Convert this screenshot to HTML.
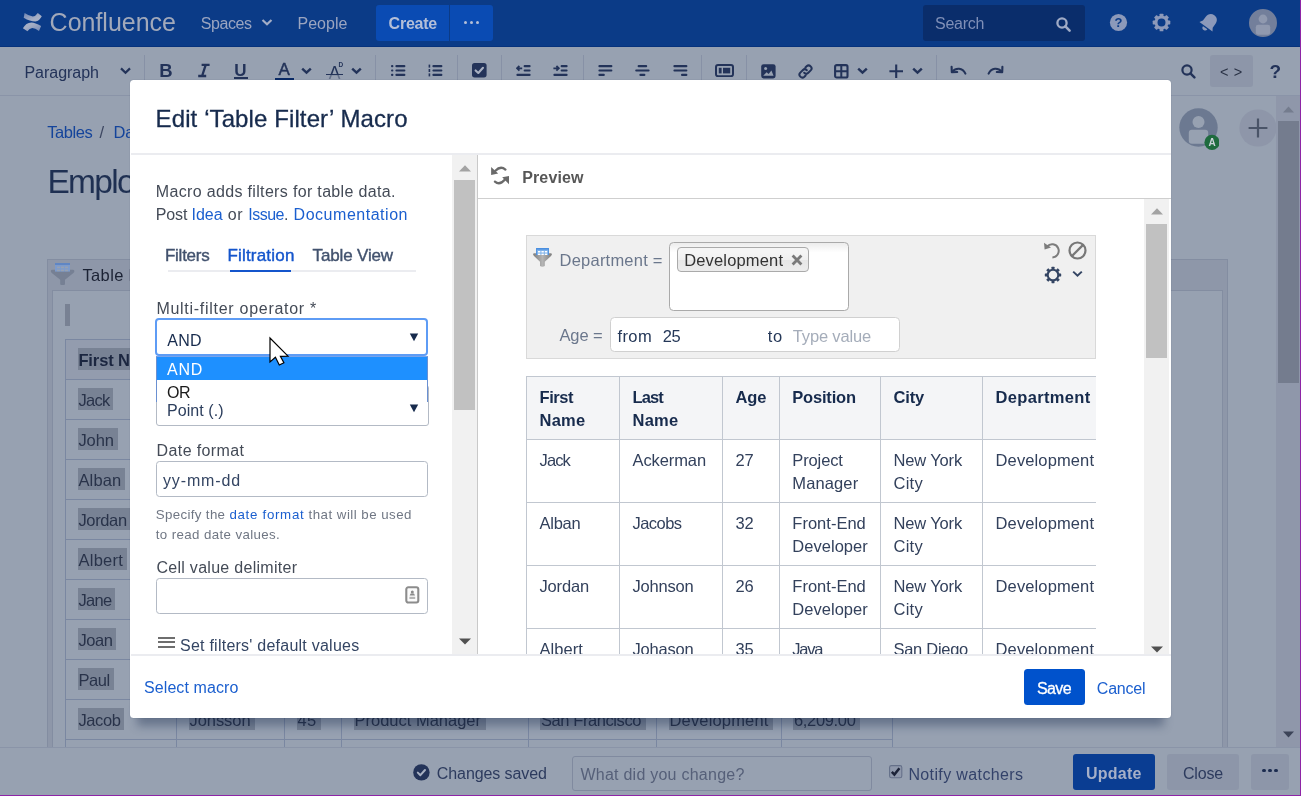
<!DOCTYPE html>
<html><head><meta charset="utf-8"><title>Edit Table Filter Macro</title><style>html,body{margin:0;padding:0}body{width:1301px;height:796px;overflow:hidden;position:relative;background:#97a1b1;font-family:'Liberation Sans',sans-serif;}.b{position:absolute;display:block}.t{position:absolute;white-space:pre;display:block}</style></head><body><div style="position:absolute;left:0;top:0;width:1301px;height:796px;will-change:transform"><div class="b" style="left:0px;top:0px;width:1301px;height:796px;background:#97a1b1;"></div><div class="b" style="left:0px;top:0px;width:1301px;height:47px;background:#0b3b87;"></div><div class="b" style="left:0px;top:46px;width:1301px;height:1px;background:#06327c;"></div><svg class="b" style="left:22px;top:12px;" width="21" height="20" viewBox="0 0 21 20"><defs><linearGradient id="lg1" x1="0" y1="0" x2="1" y2="1"><stop offset="0" stop-color="#6f85b3"/><stop offset="0.6" stop-color="#a4adc4"/><stop offset="1" stop-color="#aab3c8"/></linearGradient><linearGradient id="lg2" x1="1" y1="1" x2="0" y2="0"><stop offset="0" stop-color="#6f85b3"/><stop offset="0.6" stop-color="#a4adc4"/><stop offset="1" stop-color="#aab3c8"/></linearGradient></defs><path d="M2.6 1.1 L1.7 5.8 Q8 9.6 13.4 9.6 Q17.4 8.8 19.8 4.2 L15.8 0.9 Q13.4 4.4 10.8 4.4 Q7 4.2 2.6 1.1z" fill="url(#lg1)"/><path d="M0.9 16.3 L5.4 19.3 Q7.6 16 10.2 15.9 Q13.2 16 17 18.9 L19.1 14.1 Q13 10.5 9.5 10.4 Q3.8 10.6 0.9 16.3z" fill="url(#lg2)"/></svg><span class="t" style="left:49.60px;top:8px;font-size:25px;line-height:28px;color:#a2a9ba;letter-spacing:-0.008px;">Confluence</span><span class="t" style="left:200.80px;top:15px;font-size:16px;line-height:17px;color:#9ba5c0;letter-spacing:-0.446px;">Spaces</span><svg class="b" style="left:261px;top:18px;" width="12" height="9" viewBox="0 0 12 9"><path d="M1.5 2 L6 6.3 L10.5 2" fill="none" stroke="#a3adc6" stroke-width="2.2"/></svg><span class="t" style="left:297.60px;top:15px;font-size:16px;line-height:17px;color:#9ba5c0;letter-spacing:-0.021px;">People</span><div class="b" style="left:376px;top:5px;width:117px;height:36px;background:#0a4bb3;border-radius:3px;"></div><div class="b" style="left:449px;top:5px;width:1px;height:36px;background:#0b3b87;"></div><span class="t" style="left:388.60px;top:15px;font-size:16px;line-height:17px;color:#b4bfd8;font-weight:700;letter-spacing:-0.235px;">Create</span><div class="b" style="left:463.8px;top:20.7px;width:3.6px;height:3.6px;background:#b4bfd8;border-radius:50%;"></div><div class="b" style="left:469.8px;top:20.7px;width:3.6px;height:3.6px;background:#b4bfd8;border-radius:50%;"></div><div class="b" style="left:475.8px;top:20.7px;width:3.6px;height:3.6px;background:#b4bfd8;border-radius:50%;"></div><div class="b" style="left:923px;top:5px;width:162px;height:36px;background:#0a2d6b;border-radius:3px;"></div><span class="t" style="left:935.00px;top:15px;font-size:16px;line-height:17px;color:#7f8fb7;letter-spacing:-0.251px;">Search</span><svg class="b" style="left:1055px;top:16px;" width="17" height="17" viewBox="0 0 17 17"><circle cx="7" cy="7" r="4.6" fill="none" stroke="#a0abc6" stroke-width="2.3"/><path d="M10.4 10.4 L14.6 14.6" stroke="#a0abc6" stroke-width="2.6" stroke-linecap="round"/></svg><svg class="b" style="left:1109px;top:13px;" width="19" height="19" viewBox="0 0 19 19"><circle cx="9.5" cy="9.5" r="8.6" fill="#8c99ba"/><text x="9.5" y="14.2" text-anchor="middle" font-family="Liberation Sans" font-weight="700" font-size="13" fill="#0b3b87">?</text></svg><svg class="b" style="left:1152px;top:13px;" width="19" height="19" viewBox="0 0 19 19"><g transform="translate(9.5,9.5)"><circle r="5.5" fill="none" stroke="#8c99ba" stroke-width="3"/><rect x="-1.9" y="-8.8" width="3.8" height="3" rx="0.6" fill="#8c99ba" transform="rotate(0)"/><rect x="-1.9" y="-8.8" width="3.8" height="3" rx="0.6" fill="#8c99ba" transform="rotate(45)"/><rect x="-1.9" y="-8.8" width="3.8" height="3" rx="0.6" fill="#8c99ba" transform="rotate(90)"/><rect x="-1.9" y="-8.8" width="3.8" height="3" rx="0.6" fill="#8c99ba" transform="rotate(135)"/><rect x="-1.9" y="-8.8" width="3.8" height="3" rx="0.6" fill="#8c99ba" transform="rotate(180)"/><rect x="-1.9" y="-8.8" width="3.8" height="3" rx="0.6" fill="#8c99ba" transform="rotate(225)"/><rect x="-1.9" y="-8.8" width="3.8" height="3" rx="0.6" fill="#8c99ba" transform="rotate(270)"/><rect x="-1.9" y="-8.8" width="3.8" height="3" rx="0.6" fill="#8c99ba" transform="rotate(315)"/></g></svg><svg class="b" style="left:1198px;top:11px;" width="22" height="23" viewBox="0 0 22 23"><g transform="translate(11,11.5) rotate(36) scale(1.12) translate(-10,-9.6)"><path d="M10 1.5 C6.4 1.5 4.6 4.2 4.6 7.4 L4.6 11.4 L2.8 14.2 L17.2 14.2 L15.4 11.4 L15.4 7.4 C15.4 4.2 13.6 1.5 10 1.5z" fill="#8c99ba"/><path d="M7.6 15.4 a2.4 2.4 0 0 0 4.8 0z" fill="#8c99ba"/></g></svg><svg class="b" style="left:1249px;top:8.5px;" width="28" height="28" viewBox="0 0 28 28"><circle cx="14" cy="14" r="14" fill="#737f9b"/><circle cx="14" cy="10" r="4.4" fill="#9099af"/><rect x="6.8" y="15.8" width="14.4" height="10" rx="2.4" fill="#9099af"/></svg><div class="b" style="left:0px;top:47px;width:1301px;height:49px;background:#97a1b1;"></div><div class="b" style="left:0px;top:95px;width:1300px;height:1px;background:#8a94a8;"></div><span class="t" style="left:24.40px;top:64px;font-size:16px;line-height:17px;color:#233359;letter-spacing:-0.013px;">Paragraph</span><svg class="b" style="left:118.5px;top:65.6px;" width="13" height="10" viewBox="0 0 13 10"><path d="M2 2.4 L6.5 6.8 L11 2.4" fill="none" stroke="#233359" stroke-width="2.2"/></svg><div class="b" style="left:144px;top:55px;width:1px;height:41px;background:#8791a6;"></div><div class="b" style="left:375px;top:55px;width:1px;height:41px;background:#8791a6;"></div><div class="b" style="left:457px;top:55px;width:1px;height:41px;background:#8791a6;"></div><div class="b" style="left:501px;top:55px;width:1px;height:41px;background:#8791a6;"></div><div class="b" style="left:583px;top:55px;width:1px;height:41px;background:#8791a6;"></div><div class="b" style="left:701px;top:55px;width:1px;height:41px;background:#8791a6;"></div><div class="b" style="left:746px;top:55px;width:1px;height:41px;background:#8791a6;"></div><div class="b" style="left:936px;top:55px;width:1px;height:41px;background:#8791a6;"></div><span class="t" style="left:159.30px;top:60px;font-size:18.5px;line-height:21px;color:#233359;font-weight:700;letter-spacing:0.625px;">B</span><svg class="b" style="left:197px;top:63px;" width="14" height="15" viewBox="0 0 14 15"><path d="M4.6 1.9 H12.6 M1.2 13 H9.2 M8.7 1.9 L5.1 13" fill="none" stroke="#233359" stroke-width="2.3"/></svg><span class="t" style="left:234.20px;top:61px;font-size:17px;line-height:19px;color:#233359;font-weight:700;letter-spacing:1.519px;">U</span><div class="b" style="left:233.6px;top:77.2px;width:14.8px;height:1.8px;background:#233359;"></div><span class="t" style="left:278.60px;top:60px;font-size:17px;line-height:19px;color:#233359;-webkit-text-stroke:0.45px #233359;">A</span><div class="b" style="left:275px;top:77.6px;width:19.4px;height:2.4px;background:#0a2a66;"></div><svg class="b" style="left:300.6px;top:66.6px;" width="11" height="8" viewBox="0 0 11 8"><path d="M1.2 1.6 L5.5 5.7 L9.8 1.6" fill="none" stroke="#233359" stroke-width="2.4"/></svg><span class="t" style="left:328.80px;top:63px;font-size:17.5px;line-height:20px;color:#233359;">A</span><span class="t" style="left:338.60px;top:61px;font-size:6.5px;line-height:7px;color:#233359;font-weight:700;">D</span><div class="b" style="left:326px;top:73.8px;width:17px;height:1.3px;background:#233359;"></div><div class="b" style="left:327px;top:75px;width:15px;height:5px;background:#97a1b1;opacity:.55;"></div><svg class="b" style="left:351px;top:66.6px;" width="11" height="8" viewBox="0 0 11 8"><path d="M1.2 1.6 L5.5 5.7 L9.8 1.6" fill="none" stroke="#233359" stroke-width="2.4"/></svg><svg class="b" style="left:391px;top:64px;" width="15" height="13" viewBox="0 0 15 13"><rect x="0" y="1" width="2.4" height="2.2" rx="1" fill="#233359"/><rect x="4.4" y="1" width="10" height="2.2" rx="1" fill="#233359"/><rect x="0" y="5.4" width="2.4" height="2.2" rx="1" fill="#233359"/><rect x="4.4" y="5.4" width="10" height="2.2" rx="1" fill="#233359"/><rect x="0" y="9.8" width="2.4" height="2.2" rx="1" fill="#233359"/><rect x="4.4" y="9.8" width="10" height="2.2" rx="1" fill="#233359"/></svg><svg class="b" style="left:428px;top:64px;" width="15" height="13" viewBox="0 0 15 13"><rect x="0.6" y="0.6" width="1.6" height="3" fill="#233359"/><rect x="4.4" y="1" width="10" height="2.2" rx="1" fill="#233359"/><rect x="0.6" y="5.0" width="1.6" height="3" fill="#233359"/><rect x="4.4" y="5.4" width="10" height="2.2" rx="1" fill="#233359"/><rect x="0.6" y="9.4" width="1.6" height="3" fill="#233359"/><rect x="4.4" y="9.8" width="10" height="2.2" rx="1" fill="#233359"/></svg><svg class="b" style="left:472px;top:63.2px;" width="15" height="15" viewBox="0 0 15 15"><rect x="0" y="0" width="14.6" height="14.4" rx="2.6" fill="#233359"/><path d="M3.6 7.4 L6.3 10 L11 4.8" fill="none" stroke="#a9b1c2" stroke-width="2.1" stroke-linecap="round" stroke-linejoin="round"/></svg><svg class="b" style="left:516px;top:64px;" width="15" height="13" viewBox="0 0 15 13"><rect x="7.6" y="1" width="7" height="2.2" rx="1" fill="#233359"/><rect x="7.6" y="5.4" width="7" height="2.2" rx="1" fill="#233359"/><rect x="0.4" y="9.8" width="14.2" height="2.2" rx="1" fill="#233359"/><path d="M6.2 4.3 H1.4 M3.4 2 L1 4.3 L3.4 6.6" fill="none" stroke="#233359" stroke-width="1.8"/></svg><svg class="b" style="left:553px;top:64px;" width="15" height="13" viewBox="0 0 15 13"><rect x="7.6" y="1" width="7" height="2.2" rx="1" fill="#233359"/><rect x="7.6" y="5.4" width="7" height="2.2" rx="1" fill="#233359"/><rect x="0.4" y="9.8" width="14.2" height="2.2" rx="1" fill="#233359"/><path d="M0.4 4.3 H5.4 M3.4 2 L5.8 4.3 L3.4 6.6" fill="none" stroke="#233359" stroke-width="1.8"/></svg><svg class="b" style="left:598px;top:64px;" width="15" height="13" viewBox="0 0 15 13"><rect x="0.4" y="1" width="14" height="2.2" rx="1" fill="#233359"/><rect x="0.4" y="5.4" width="14" height="2.2" rx="1" fill="#233359"/><rect x="0.4" y="9.8" width="6.4" height="2.2" rx="1" fill="#233359"/></svg><svg class="b" style="left:635px;top:64px;" width="15" height="13" viewBox="0 0 15 13"><rect x="2.6" y="1" width="9.6" height="2.2" rx="1" fill="#233359"/><rect x="0.2" y="5.4" width="14.4" height="2.2" rx="1" fill="#233359"/><rect x="4.4" y="9.8" width="6" height="2.2" rx="1" fill="#233359"/></svg><svg class="b" style="left:672.6px;top:64px;" width="15" height="13" viewBox="0 0 15 13"><rect x="0.4" y="1" width="14" height="2.2" rx="1" fill="#233359"/><rect x="0.4" y="5.4" width="14" height="2.2" rx="1" fill="#233359"/><rect x="8" y="9.8" width="6.4" height="2.2" rx="1" fill="#233359"/></svg><svg class="b" style="left:714.5px;top:64px;" width="19" height="13.4" viewBox="0 0 19 13.4"><rect x="1" y="1" width="17" height="11.2" rx="2" fill="none" stroke="#233359" stroke-width="2"/><rect x="3.8" y="3.8" width="2.8" height="5.6" fill="#233359"/><rect x="8" y="3.8" width="7.2" height="5.6" fill="#233359"/></svg><svg class="b" style="left:761px;top:63.5px;" width="15" height="15" viewBox="0 0 15 15"><rect x="0.2" y="0.2" width="14.4" height="14.2" rx="2.4" fill="#233359"/><circle cx="4.6" cy="4.6" r="1.5" fill="#97a1b1"/><path d="M2.2 11.8 L5.6 8.2 L7.6 10 L10.4 6.6 L12.6 11.8z" fill="#97a1b1"/></svg><svg class="b" style="left:798px;top:63.5px;" width="15" height="15" viewBox="0 0 15 15"><g fill="none" stroke="#233359" stroke-width="2" stroke-linecap="round"><path d="M6.2 8.8 a2.9 2.9 0 0 0 4.1 0 l2.4 -2.4 a2.9 2.9 0 0 0 -4.1 -4.1 l-1.2 1.2"/><path d="M8.8 6.2 a2.9 2.9 0 0 0 -4.1 0 l-2.4 2.4 a2.9 2.9 0 0 0 4.1 4.1 l1.2 -1.2"/></g></svg><svg class="b" style="left:834px;top:63.5px;" width="15" height="15" viewBox="0 0 15 15"><rect x="1.1" y="1.1" width="12.4" height="12.4" rx="1.6" fill="none" stroke="#233359" stroke-width="2.1"/><path d="M7.3 1 V13.6 M1 7.3 H13.6" stroke="#233359" stroke-width="2"/></svg><svg class="b" style="left:857.4px;top:66.6px;" width="11" height="8" viewBox="0 0 11 8"><path d="M1.2 1.6 L5.5 5.7 L9.8 1.6" fill="none" stroke="#233359" stroke-width="2.4"/></svg><svg class="b" style="left:889px;top:63.5px;" width="15" height="15" viewBox="0 0 15 15"><path d="M7.2 0.6 V14 M0.4 7.3 H14" stroke="#233359" stroke-width="2.1"/></svg><svg class="b" style="left:912.4px;top:66.6px;" width="11" height="8" viewBox="0 0 11 8"><path d="M1.2 1.6 L5.5 5.7 L9.8 1.6" fill="none" stroke="#233359" stroke-width="2.4"/></svg><svg class="b" style="left:950px;top:65px;" width="17" height="11" viewBox="0 0 17 11"><path d="M2.4 6.6 C6 2.4 12.4 2.6 15.4 8.6" fill="none" stroke="#233359" stroke-width="2.1" stroke-linecap="round"/><path d="M1.6 1.8 L1.8 7.2 L7.2 7" fill="none" stroke="#233359" stroke-width="2.1" stroke-linecap="round" stroke-linejoin="round"/></svg><svg class="b" style="left:987px;top:65px;" width="17" height="11" viewBox="0 0 17 11"><g transform="translate(17,0) scale(-1,1)"><path d="M2.4 6.6 C6 2.4 12.4 2.6 15.4 8.6" fill="none" stroke="#233359" stroke-width="2.1" stroke-linecap="round"/><path d="M1.6 1.8 L1.8 7.2 L7.2 7" fill="none" stroke="#233359" stroke-width="2.1" stroke-linecap="round" stroke-linejoin="round"/></g></svg><svg class="b" style="left:1181px;top:64px;" width="15" height="15" viewBox="0 0 15 15"><circle cx="6" cy="6" r="4.6" fill="none" stroke="#233359" stroke-width="2.2"/><path d="M9.4 9.4 L13.4 13.4" stroke="#233359" stroke-width="2.4" stroke-linecap="round"/></svg><div class="b" style="left:1210px;top:55px;width:43px;height:31.6px;background:#8d96a9;border-radius:3px;"></div><span class="t" style="left:1220.00px;top:64px;font-size:14.5px;line-height:16px;color:#2a3246;letter-spacing:0.677px;">&lt; &gt;</span><span class="t" style="left:1269.60px;top:61px;font-size:19px;line-height:21px;color:#233359;font-weight:700;letter-spacing:-1.609px;">?</span><span class="t" style="left:47.30px;top:123px;font-size:16.5px;line-height:18px;color:#14449b;letter-spacing:-0.467px;">Tables</span><span class="t" style="left:99.60px;top:123px;font-size:16.5px;line-height:18px;color:#3c4660;">/</span><span class="t" style="left:113.40px;top:123px;font-size:16.5px;line-height:18px;color:#14449b;">Da</span><span class="t" style="left:47.40px;top:163px;font-size:33.5px;line-height:37px;color:#1f3052;letter-spacing:-1.674px;">Emplo</span><svg class="b" style="left:1178.5px;top:108px;" width="40" height="43" viewBox="0 0 40 43"><circle cx="19.5" cy="19.5" r="19.2" fill="#6c7991"/><circle cx="19.5" cy="14" r="6" fill="#97a1b1"/><rect x="9.8" y="21.8" width="19.4" height="14" rx="3" fill="#97a1b1"/><circle cx="33" cy="34.4" r="7.6" fill="#1f6b3e"/><text x="33" y="38" text-anchor="middle" font-family="Liberation Sans" font-weight="700" font-size="10" fill="#ccd2da">A</text></svg><svg class="b" style="left:1238.5px;top:108.5px;" width="38" height="38" viewBox="0 0 38 38"><circle cx="19" cy="19" r="18.6" fill="#8e96a9"/><path d="M19 9.6 V28.4 M9.6 19 H28.4" stroke="#4a5468" stroke-width="2.2"/></svg><div class="b" style="left:1276px;top:96px;width:24px;height:652px;background:#8f97aa;"></div><div class="b" style="left:1278px;top:121px;width:21px;height:262px;background:#747c8e;"></div><svg class="b" style="left:1283px;top:105.6px;" width="11" height="7" viewBox="0 0 11 7"><path d="M0 6.4 L5.5 0.4 L11 6.4z" fill="#747c8e"/></svg><svg class="b" style="left:1283px;top:730.6px;" width="11" height="7" viewBox="0 0 11 7"><path d="M0 0.4 L5.5 6.4 L11 0.4z" fill="#3c4458"/></svg><div class="b" style="left:47px;top:259px;width:1181px;height:489px;background:#8e97a9;border:1px solid #838da1;box-sizing:border-box;"></div><div class="b" style="left:52px;top:290px;width:1171px;height:458px;background:#97a1b1;border:1px solid #838da1;border-bottom:0;box-sizing:border-box;"></div><svg class="b" style="left:50px;top:262px;" width="26" height="25" viewBox="0 0 26 25"><path d="M0.8 9 Q0.8 7.8 2.4 7.8 L22.8 7.8 Q24.4 7.8 24.4 9 Q24.4 10 23.4 11 L15 17.8 L15 22.4 Q12.6 23.8 10.2 22.4 L10.2 17.8 L1.8 11 Q0.8 10 0.8 9z" fill="#768094"/><rect x="5" y="1" width="15" height="8.6" fill="#7d9bcb"/><rect x="5" y="1" width="15" height="2" fill="#5f86c4"/><g fill="#97a1b1"><rect x="7" y="4.6" width="3" height="1.6"/><rect x="11" y="4.6" width="3" height="1.6"/><rect x="15" y="4.6" width="3" height="1.6"/><rect x="7" y="7.6" width="3" height="1.6"/><rect x="11" y="7.6" width="3" height="1.6"/><rect x="15" y="7.6" width="3" height="1.6"/></g></svg><span class="t" style="left:82.50px;top:266px;font-size:16.5px;line-height:18px;color:#1b2234;letter-spacing:0.342px;">Table F</span><div class="b" style="left:65px;top:304px;width:5px;height:21.6px;background:#788193;"></div><div class="b" style="left:65px;top:339px;width:827px;height:40px;background:#939cae;"></div><div class="b" style="left:65px;top:339px;width:828px;height:1px;background:#7a87a1;"></div><div class="b" style="left:65px;top:379px;width:828px;height:1px;background:#7a87a1;"></div><div class="b" style="left:65px;top:419px;width:828px;height:1px;background:#7a87a1;"></div><div class="b" style="left:65px;top:459px;width:828px;height:1px;background:#7a87a1;"></div><div class="b" style="left:65px;top:499px;width:828px;height:1px;background:#7a87a1;"></div><div class="b" style="left:65px;top:539px;width:828px;height:1px;background:#7a87a1;"></div><div class="b" style="left:65px;top:579px;width:828px;height:1px;background:#7a87a1;"></div><div class="b" style="left:65px;top:619px;width:828px;height:1px;background:#7a87a1;"></div><div class="b" style="left:65px;top:659px;width:828px;height:1px;background:#7a87a1;"></div><div class="b" style="left:65px;top:699px;width:828px;height:1px;background:#7a87a1;"></div><div class="b" style="left:65px;top:739px;width:828px;height:1px;background:#7a87a1;"></div><div class="b" style="left:65px;top:339px;width:1px;height:409px;background:#7a87a1;"></div><div class="b" style="left:176px;top:339px;width:1px;height:409px;background:#7a87a1;"></div><div class="b" style="left:284px;top:339px;width:1px;height:409px;background:#7a87a1;"></div><div class="b" style="left:341px;top:339px;width:1px;height:409px;background:#7a87a1;"></div><div class="b" style="left:528px;top:339px;width:1px;height:409px;background:#7a87a1;"></div><div class="b" style="left:656px;top:339px;width:1px;height:409px;background:#7a87a1;"></div><div class="b" style="left:781px;top:339px;width:1px;height:409px;background:#7a87a1;"></div><div class="b" style="left:892px;top:339px;width:1px;height:409px;background:#7a87a1;"></div><div class="b" style="left:77.6px;top:348.4px;width:60px;height:21.4px;background:#788294;"></div><span class="t" style="left:78.40px;top:351px;font-size:16.5px;line-height:18px;color:#1b2640;font-weight:700;letter-spacing:-0.109px;">First N</span><div class="b" style="left:77.6px;top:388.4px;width:35.8px;height:21.4px;background:#788294;"></div><span class="t" style="left:78.40px;top:391px;font-size:16.5px;line-height:18px;color:#29334a;letter-spacing:-0.684px;">Jack</span><div class="b" style="left:77.6px;top:428.4px;width:40px;height:21.4px;background:#788294;"></div><span class="t" style="left:78.40px;top:431px;font-size:16.5px;line-height:18px;color:#29334a;letter-spacing:-0.095px;">John</span><div class="b" style="left:77.6px;top:468.4px;width:47.6px;height:21.4px;background:#788294;"></div><span class="t" style="left:78.40px;top:471px;font-size:16.5px;line-height:18px;color:#29334a;letter-spacing:0.159px;">Alban</span><div class="b" style="left:77.6px;top:508.4px;width:53px;height:21.4px;background:#788294;"></div><span class="t" style="left:78.40px;top:511px;font-size:16.5px;line-height:18px;color:#29334a;letter-spacing:-0.342px;">Jordan</span><div class="b" style="left:77.6px;top:548.4px;width:49.4px;height:21.4px;background:#788294;"></div><span class="t" style="left:78.40px;top:551px;font-size:16.5px;line-height:18px;color:#29334a;letter-spacing:0.282px;">Albert</span><div class="b" style="left:77.6px;top:588.4px;width:37.7px;height:21.4px;background:#788294;"></div><span class="t" style="left:78.40px;top:591px;font-size:16.5px;line-height:18px;color:#29334a;letter-spacing:-0.670px;">Jane</span><div class="b" style="left:77.6px;top:628.4px;width:38.8px;height:21.4px;background:#788294;"></div><span class="t" style="left:78.40px;top:631px;font-size:16.5px;line-height:18px;color:#29334a;letter-spacing:-0.395px;">Joan</span><div class="b" style="left:77.6px;top:668.4px;width:36px;height:21.4px;background:#788294;"></div><span class="t" style="left:78.40px;top:671px;font-size:16.5px;line-height:18px;color:#29334a;letter-spacing:-0.408px;">Paul</span><div class="b" style="left:77.6px;top:708.4px;width:46.8px;height:21.4px;background:#788294;"></div><span class="t" style="left:78.40px;top:711px;font-size:16.5px;line-height:18px;color:#29334a;letter-spacing:-0.366px;">Jacob</span><div class="b" style="left:188.5px;top:708.4px;width:66.6px;height:21.4px;background:#788294;"></div><span class="t" style="left:189.50px;top:711px;font-size:16.5px;line-height:18px;color:#29334a;letter-spacing:-0.067px;">Jonsson</span><div class="b" style="left:296.5px;top:708.4px;width:24.6px;height:21.4px;background:#788294;"></div><span class="t" style="left:297.50px;top:711px;font-size:16.5px;line-height:18px;color:#29334a;letter-spacing:0.320px;">45</span><div class="b" style="left:353.5px;top:708.4px;width:132.1px;height:21.4px;background:#788294;"></div><span class="t" style="left:354.50px;top:711px;font-size:16.5px;line-height:18px;color:#29334a;letter-spacing:-0.005px;">Product Manager</span><div class="b" style="left:540px;top:708.4px;width:105.6px;height:21.4px;background:#788294;"></div><span class="t" style="left:541.00px;top:711px;font-size:16.5px;line-height:18px;color:#29334a;letter-spacing:-0.421px;">San Francisco</span><div class="b" style="left:668.5px;top:708.4px;width:104.6px;height:21.4px;background:#788294;"></div><span class="t" style="left:669.50px;top:711px;font-size:16.5px;line-height:18px;color:#29334a;letter-spacing:0.161px;">Development</span><div class="b" style="left:793px;top:708.4px;width:67.1px;height:21.4px;background:#788294;"></div><span class="t" style="left:794.00px;top:711px;font-size:16.5px;line-height:18px;color:#29334a;letter-spacing:-0.342px;">6,209.00</span><div class="b" style="left:0px;top:747px;width:1301px;height:49px;background:#97a1b1;"></div><div class="b" style="left:0px;top:747px;width:1301px;height:1px;background:#8a94a8;"></div><svg class="b" style="left:412.8px;top:764px;" width="17" height="17" viewBox="0 0 17 17"><circle cx="8.4" cy="8.4" r="8.2" fill="#233359"/><path d="M4.8 8.6 L7.4 11.2 L12 6" fill="none" stroke="#a9b1c2" stroke-width="2" stroke-linecap="round" stroke-linejoin="round"/></svg><span class="t" style="left:436.80px;top:765px;font-size:16px;line-height:17px;color:#2d3b5e;letter-spacing:-0.091px;">Changes saved</span><div class="b" style="left:572px;top:755.5px;width:300px;height:35.5px;background:#97a1b1;border:1px solid #808a9f;border-radius:3px;box-sizing:border-box;"></div><span class="t" style="left:580.40px;top:766px;font-size:16px;line-height:17px;color:#566079;letter-spacing:0.249px;">What did you change?</span><svg class="b" style="left:889px;top:765px;" width="14" height="14" viewBox="0 0 14 14"><rect x="0.6" y="0.6" width="12.2" height="12.2" rx="1.8" fill="#8f98ab" stroke="#657089" stroke-width="1.1"/><path d="M2.8 6.8 L5.4 9.6 L10.4 3.2" fill="none" stroke="#1c2338" stroke-width="2.5"/></svg><span class="t" style="left:908.40px;top:766px;font-size:16px;line-height:17px;color:#33426a;letter-spacing:0.375px;">Notify watchers</span><div class="b" style="left:1073px;top:754px;width:82px;height:36px;background:#0a3d92;border-radius:3px;"></div><span class="t" style="left:1086.00px;top:765px;font-size:16px;line-height:17px;color:#a6b0c8;font-weight:700;letter-spacing:0.228px;">Update</span><div class="b" style="left:1167px;top:754px;width:72px;height:36px;background:#8d96a9;border-radius:3px;"></div><span class="t" style="left:1183.00px;top:765px;font-size:16px;line-height:17px;color:#2d3b5e;letter-spacing:-0.181px;">Close</span><div class="b" style="left:1251px;top:754px;width:38px;height:36px;background:#8d96a9;border-radius:3px;"></div><div class="b" style="left:1262.4px;top:768.6px;width:3.2px;height:3.2px;background:#1c2c50;border-radius:50%;"></div><div class="b" style="left:1268.4px;top:768.6px;width:3.2px;height:3.2px;background:#1c2c50;border-radius:50%;"></div><div class="b" style="left:1274.4px;top:768.6px;width:3.2px;height:3.2px;background:#1c2c50;border-radius:50%;"></div><div class="b" style="left:137px;top:708px;width:1027px;height:18px;background:rgba(9,30,66,.34);filter:blur(5px);"></div><div class="b" style="left:130px;top:80px;width:1041px;height:637.6px;background:#fff;border-radius:3.5px;box-shadow:0 0 1px rgba(9,30,66,.4);"></div><span class="t" style="left:155.60px;top:105px;font-size:24px;line-height:27px;color:#172b4d;letter-spacing:0.103px;-webkit-text-stroke:0.3px #172b4d;">Edit ‘Table Filter’ Macro</span><div class="b" style="left:131px;top:153px;width:1039.5px;height:2px;background:#ebecf0;"></div><div class="b" style="left:131px;top:654px;width:1039.5px;height:2px;background:#ebecf0;"></div><span class="t" style="left:155.80px;top:183px;font-size:16px;line-height:17px;color:#444b57;letter-spacing:0.336px;">Macro adds filters for table data.</span><span class="t" style="left:155.80px;top:206px;font-size:16px;line-height:17px;color:#444b57;letter-spacing:-0.134px;">Post </span><span class="t" style="left:191.60px;top:206px;font-size:16px;line-height:17px;color:#1b5fcf;letter-spacing:-0.035px;">Idea</span><span class="t" style="left:222.60px;top:206px;font-size:16px;line-height:17px;color:#444b57;letter-spacing:0.619px;"> or </span><span class="t" style="left:248.20px;top:206px;font-size:16px;line-height:17px;color:#1b5fcf;letter-spacing:-0.490px;">Issue</span><span class="t" style="left:284.00px;top:206px;font-size:16px;line-height:17px;color:#444b57;letter-spacing:0.355px;">. </span><span class="t" style="left:293.60px;top:206px;font-size:16px;line-height:17px;color:#1b5fcf;letter-spacing:0.521px;">Documentation</span><span class="t" style="left:165.00px;top:246px;font-size:17px;line-height:19px;color:#42526e;letter-spacing:-0.269px;-webkit-text-stroke:0.4px #42526e;">Filters</span><span class="t" style="left:227.40px;top:246px;font-size:17px;line-height:19px;color:#1455cc;letter-spacing:0.201px;-webkit-text-stroke:0.4px #1455cc;">Filtration</span><span class="t" style="left:312.60px;top:246px;font-size:17px;line-height:19px;color:#42526e;letter-spacing:-0.151px;-webkit-text-stroke:0.4px #42526e;">Table View</span><div class="b" style="left:168px;top:270px;width:248px;height:2px;background:#ebecf0;"></div><div class="b" style="left:230px;top:270px;width:61px;height:2px;background:#1455cc;"></div><span class="t" style="left:156.40px;top:300px;font-size:16px;line-height:17px;color:#444b57;letter-spacing:0.720px;">Multi-filter operator *</span><div class="b" style="left:155px;top:318px;width:273px;height:38px;background:#fff;border:2px solid #5e9cf5;border-radius:4px;box-sizing:border-box;"></div><span class="t" style="left:167.30px;top:332px;font-size:16px;line-height:17px;color:#172b4d;letter-spacing:0.240px;">AND</span><svg class="b" style="left:409px;top:332.6px;" width="10" height="9" viewBox="0 0 10 9"><path d="M0.8 0.4 H9.2 L5 8.2z" fill="#172b4d"/></svg><div class="b" style="left:155.5px;top:385px;width:273px;height:40.8px;background:#fff;border:1px solid #b3bac5;border-radius:3px;box-sizing:border-box;"></div><span class="t" style="left:167.00px;top:402px;font-size:16px;line-height:17px;color:#2c3e5d;letter-spacing:0.065px;">Point (.)</span><svg class="b" style="left:409px;top:403.8px;" width="10" height="9" viewBox="0 0 10 9"><path d="M0.8 0.4 H9.2 L5 8.2z" fill="#172b4d"/></svg><div class="b" style="left:156px;top:356px;width:272px;height:46.4px;background:#fff;border-left:1px solid #6a90d2;border-right:1px solid #6a90d2;border-top:1px solid #79a4ea;box-sizing:border-box;"></div><div class="b" style="left:157px;top:357px;width:270px;height:22.7px;background:#1e90ff;"></div><span class="t" style="left:167.00px;top:361px;font-size:16px;line-height:17px;color:#fff;letter-spacing:0.740px;">AND</span><span class="t" style="left:167.00px;top:384px;font-size:16px;line-height:17px;color:#1a1a1a;letter-spacing:-0.500px;">OR</span><span class="t" style="left:156.60px;top:442px;font-size:16px;line-height:17px;color:#444b57;letter-spacing:0.382px;">Date format</span><div class="b" style="left:156px;top:461px;width:272.4px;height:36px;background:#fff;border:1px solid #b3bac5;border-radius:3.5px;box-sizing:border-box;"></div><span class="t" style="left:163.00px;top:472px;font-size:16px;line-height:17px;color:#344563;letter-spacing:0.861px;">yy-mm-dd</span><span class="t" style="left:155.80px;top:507px;font-size:13.3px;line-height:15px;color:#707784;letter-spacing:0.343px;">Specify the </span><span class="t" style="left:229.40px;top:507px;font-size:13.3px;line-height:15px;color:#1b5fcf;letter-spacing:0.703px;">date format</span><span class="t" style="left:304.40px;top:507px;font-size:13.3px;line-height:15px;color:#707784;letter-spacing:0.475px;"> that will be used</span><span class="t" style="left:155.80px;top:527px;font-size:13.3px;line-height:15px;color:#707784;letter-spacing:0.380px;">to read date values.</span><span class="t" style="left:156.40px;top:559px;font-size:16px;line-height:17px;color:#444b57;letter-spacing:0.291px;">Cell value delimiter</span><div class="b" style="left:156px;top:578px;width:272.2px;height:36px;background:#fff;border:1px solid #b3bac5;border-radius:3.5px;box-sizing:border-box;"></div><svg class="b" style="left:405.2px;top:586.4px;" width="15" height="18" viewBox="0 0 15 18"><rect x="1.3" y="1.3" width="12" height="15.2" rx="2" fill="#fbfbfb" stroke="#8c8c8c" stroke-width="2.1"/><circle cx="7.3" cy="6" r="1.5" fill="#8a8a8a"/><path d="M4.6 9.6 L5.6 7.4 H9 L10 9.6z" fill="#8a8a8a"/><rect x="4.4" y="10.8" width="5.8" height="2.2" fill="#b5b5b5"/></svg><div class="b" style="left:158.2px;top:636.6px;width:16.8px;height:2px;background:#6e6e6e;"></div><div class="b" style="left:158.2px;top:641.4px;width:16.8px;height:2px;background:#6e6e6e;"></div><div class="b" style="left:158.2px;top:646.2px;width:16.8px;height:2px;background:#6e6e6e;"></div><span class="t" style="left:180.00px;top:637px;font-size:16px;line-height:17px;color:#344563;letter-spacing:0.240px;">Set filters&#x27; default values</span><div class="b" style="left:452px;top:155px;width:25px;height:499px;background:#f1f1f1;"></div><div class="b" style="left:454px;top:180px;width:21px;height:230.4px;background:#c1c1c1;"></div><svg class="b" style="left:458.6px;top:164.6px;" width="12" height="7" viewBox="0 0 12 7"><path d="M0 6.4 L6 0.2 L12 6.4z" fill="#a3a3a3"/></svg><svg class="b" style="left:458.6px;top:637.6px;" width="12" height="7" viewBox="0 0 12 7"><path d="M0 0.4 L6 6.6 L12 0.4z" fill="#505050"/></svg><div class="b" style="left:477px;top:155px;width:1px;height:499px;background:#c9c9c9;"></div><svg class="b" style="left:490px;top:166px;" width="20" height="20" viewBox="0 0 20 20"><g fill="none" stroke="#6a6a6a" stroke-width="2.3" stroke-linecap="round"><path d="M15.4 3.6 Q10.6 -0.6 5.4 4.8"/><path d="M5 15.6 Q9.6 19.6 15 13.4"/></g><path d="M1.1 1 L1.1 9 L8.2 7.6z" fill="#6a6a6a"/><path d="M12.2 11.2 L19 10 L19 18.2z" fill="#6a6a6a"/></svg><span class="t" style="left:522.20px;top:169px;font-size:16px;line-height:17px;color:#575757;font-weight:700;letter-spacing:0.131px;">Preview</span><div class="b" style="left:478px;top:198px;width:692.5px;height:1px;background:#cfcfcf;"></div><div class="b" style="left:1144px;top:199px;width:25px;height:455px;background:#f1f1f1;"></div><div class="b" style="left:1146px;top:224px;width:21px;height:134px;background:#c1c1c1;"></div><svg class="b" style="left:1150.6px;top:208.4px;" width="12" height="7" viewBox="0 0 12 7"><path d="M0 6.4 L6 0.2 L12 6.4z" fill="#a3a3a3"/></svg><svg class="b" style="left:1150.6px;top:645.6px;" width="12" height="7" viewBox="0 0 12 7"><path d="M0 0.4 L6 6.6 L12 0.4z" fill="#505050"/></svg><div class="b" style="left:526px;top:235px;width:570px;height:124px;background:#f0f0f0;border:1px solid #d9d9d9;box-sizing:border-box;"></div><svg class="b" style="left:532px;top:247px;" width="21" height="21" viewBox="0 0 21 21"><defs><linearGradient id="fg" x1="0" y1="0" x2="1" y2="0"><stop offset="0" stop-color="#7d7d7d"/><stop offset="0.5" stop-color="#b4b4b4"/><stop offset="1" stop-color="#7d7d7d"/></linearGradient></defs><path d="M1.1 7.3 Q1.1 6.2 2.4 6.2 L18.6 6.2 Q19.9 6.2 19.9 7.3 Q19.9 8.1 19 8.9 L12.8 14.7 L12.8 19 Q10.4 20.5 8 19 L8 14.7 L2 8.9 Q1.1 8.1 1.1 7.3z" fill="url(#fg)"/><rect x="4.5" y="1" width="12" height="7" fill="#7fb2ea"/><rect x="4.5" y="1" width="12" height="1.6" fill="#4a8fe0"/><path d="M4.5 1 V8 M16.5 1 V8" stroke="#4a8fe0" stroke-width="0.9"/><g fill="#fff"><rect x="6" y="4" width="2.4" height="1.5"/><rect x="9.4" y="4" width="2.4" height="1.5"/><rect x="12.8" y="4" width="2.4" height="1.5"/><rect x="6" y="6.6" width="2.4" height="1.4"/><rect x="9.4" y="6.6" width="2.4" height="1.4"/><rect x="12.8" y="6.6" width="2.4" height="1.4"/></g></svg><span class="t" style="left:559.60px;top:251px;font-size:16.5px;line-height:18px;color:#6b778c;letter-spacing:0.214px;">Department =</span><div class="b" style="left:669px;top:242px;width:180px;height:68.6px;background:#fff;border:1px solid #aaa;border-radius:4.5px;box-sizing:border-box;background:linear-gradient(#ececec 0%,#fff 14%);"></div><div class="b" style="left:677px;top:247px;width:132px;height:25px;background:#ececec;border:1px solid #aaa;border-radius:4px;box-sizing:border-box;background:linear-gradient(#f5f5f5 20%,#f0f0f0 50%,#e6e6e6 52%,#ececec 100%);"></div><span class="t" style="left:684.20px;top:251px;font-size:16.5px;line-height:18px;color:#333;letter-spacing:0.161px;">Development</span><svg class="b" style="left:790.6px;top:254.4px;" width="12" height="12" viewBox="0 0 12 12"><path d="M1.6 1.6 L10.4 10.4 M10.4 1.6 L1.6 10.4" stroke="#7a7a7a" stroke-width="2.8"/></svg><span class="t" style="left:559.40px;top:326px;font-size:16.5px;line-height:18px;color:#6b778c;letter-spacing:-0.079px;">Age =</span><div class="b" style="left:610px;top:317px;width:289.6px;height:34.6px;background:#fff;border:1px solid #d0d0d0;border-radius:4.5px;box-sizing:border-box;"></div><span class="t" style="left:617.60px;top:327px;font-size:16.5px;line-height:18px;color:#253858;letter-spacing:0.350px;">from</span><span class="t" style="left:662.80px;top:327px;font-size:16.5px;line-height:18px;color:#253858;letter-spacing:-0.380px;">25</span><span class="t" style="left:767.80px;top:327px;font-size:16.5px;line-height:18px;color:#253858;letter-spacing:0.717px;">to</span><span class="t" style="left:792.80px;top:327px;font-size:16.5px;line-height:18px;color:#a5adba;letter-spacing:-0.161px;">Type value</span><svg class="b" style="left:1043px;top:241px;" width="19" height="18" viewBox="0 0 19 18"><path d="M4.2 5.4 A6.6 6.6 0 1 1 9.4 16.4" fill="none" stroke="#7c7c7c" stroke-width="2"/><path d="M1 1.8 L1.6 8.4 L8 6.6z" fill="#7c7c7c"/></svg><svg class="b" style="left:1068.4px;top:240.6px;" width="19" height="19" viewBox="0 0 19 19"><circle cx="9.5" cy="9.5" r="8" fill="none" stroke="#777" stroke-width="2.2"/><path d="M3.9 15.1 L15.1 3.9" stroke="#777" stroke-width="2.2"/></svg><svg class="b" style="left:1044px;top:265.6px;" width="18" height="18" viewBox="0 0 18 18"><g transform="translate(9,9)"><circle r="5.3" fill="none" stroke="#344563" stroke-width="2.1"/><rect x="-1.5" y="-8.2" width="3" height="2.6" rx="0.4" fill="#344563" transform="rotate(0)"/><rect x="-1.5" y="-8.2" width="3" height="2.6" rx="0.4" fill="#344563" transform="rotate(45)"/><rect x="-1.5" y="-8.2" width="3" height="2.6" rx="0.4" fill="#344563" transform="rotate(90)"/><rect x="-1.5" y="-8.2" width="3" height="2.6" rx="0.4" fill="#344563" transform="rotate(135)"/><rect x="-1.5" y="-8.2" width="3" height="2.6" rx="0.4" fill="#344563" transform="rotate(180)"/><rect x="-1.5" y="-8.2" width="3" height="2.6" rx="0.4" fill="#344563" transform="rotate(225)"/><rect x="-1.5" y="-8.2" width="3" height="2.6" rx="0.4" fill="#344563" transform="rotate(270)"/><rect x="-1.5" y="-8.2" width="3" height="2.6" rx="0.4" fill="#344563" transform="rotate(315)"/></g></svg><svg class="b" style="left:1071.6px;top:269.6px;" width="11" height="8" viewBox="0 0 11 8"><path d="M1.2 1.6 L5.5 5.7 L9.8 1.6" fill="none" stroke="#344563" stroke-width="2"/></svg><div class="b" style="left:526px;top:376px;width:570px;height:278px;overflow:hidden;"><div class="b" style="left:0;top:0;width:600px;height:63px;background:#f4f5f7"></div><div class="b" style="left:0;top:0px;width:600px;height:1px;background:#c1c7d0"></div><div class="b" style="left:0;top:63px;width:600px;height:1px;background:#c1c7d0"></div><div class="b" style="left:0;top:126px;width:600px;height:1px;background:#c1c7d0"></div><div class="b" style="left:0;top:189px;width:600px;height:1px;background:#c1c7d0"></div><div class="b" style="left:0;top:252px;width:600px;height:1px;background:#c1c7d0"></div><div class="b" style="left:0;top:315px;width:600px;height:1px;background:#c1c7d0"></div><div class="b" style="left:0px;top:0;width:1px;height:330px;background:#c1c7d0"></div><div class="b" style="left:93px;top:0;width:1px;height:330px;background:#c1c7d0"></div><div class="b" style="left:196px;top:0;width:1px;height:330px;background:#c1c7d0"></div><div class="b" style="left:253px;top:0;width:1px;height:330px;background:#c1c7d0"></div><div class="b" style="left:354px;top:0;width:1px;height:330px;background:#c1c7d0"></div><div class="b" style="left:456px;top:0;width:1px;height:330px;background:#c1c7d0"></div><div class="b" style="left:600px;top:0;width:1px;height:330px;background:#c1c7d0"></div></div><span class="t" style="left:539.50px;top:388px;font-size:16.5px;line-height:18px;color:#172b4d;font-weight:700;letter-spacing:-0.453px;">First</span><span class="t" style="left:539.50px;top:411px;font-size:16.5px;line-height:18px;color:#172b4d;font-weight:700;letter-spacing:0.262px;">Name</span><span class="t" style="left:632.50px;top:388px;font-size:16.5px;line-height:18px;color:#172b4d;font-weight:700;letter-spacing:-0.859px;">Last</span><span class="t" style="left:632.50px;top:411px;font-size:16.5px;line-height:18px;color:#172b4d;font-weight:700;letter-spacing:0.262px;">Name</span><span class="t" style="left:735.40px;top:388px;font-size:16.5px;line-height:18px;color:#172b4d;font-weight:700;letter-spacing:-0.057px;">Age</span><span class="t" style="left:792.30px;top:388px;font-size:16.5px;line-height:18px;color:#172b4d;font-weight:700;letter-spacing:-0.199px;">Position</span><span class="t" style="left:893.50px;top:388px;font-size:16.5px;line-height:18px;color:#172b4d;font-weight:700;letter-spacing:-0.168px;">City</span><span class="t" style="left:995.60px;top:388px;font-size:16.5px;line-height:18px;color:#172b4d;font-weight:700;letter-spacing:0.331px;">Department</span><span class="t" style="left:539.50px;top:451px;font-size:16.5px;line-height:18px;color:#33415c;letter-spacing:-0.859px;">Jack</span><span class="t" style="left:632.50px;top:451px;font-size:16.5px;line-height:18px;color:#33415c;letter-spacing:-0.098px;">Ackerman</span><span class="t" style="left:735.40px;top:451px;font-size:16.5px;line-height:18px;color:#33415c;letter-spacing:-0.180px;">27</span><span class="t" style="left:792.30px;top:451px;font-size:16.5px;line-height:18px;color:#33415c;letter-spacing:-0.123px;">Project</span><span class="t" style="left:792.30px;top:474px;font-size:16.5px;line-height:18px;color:#33415c;letter-spacing:0.125px;">Manager</span><span class="t" style="left:893.50px;top:451px;font-size:16.5px;line-height:18px;color:#33415c;letter-spacing:-0.152px;">New York</span><span class="t" style="left:893.50px;top:474px;font-size:16.5px;line-height:18px;color:#33415c;letter-spacing:0.270px;">City</span><span class="t" style="left:995.60px;top:451px;font-size:16.5px;line-height:18px;color:#33415c;letter-spacing:0.115px;">Development</span><span class="t" style="left:539.50px;top:514px;font-size:16.5px;line-height:18px;color:#33415c;letter-spacing:-0.241px;">Alban</span><span class="t" style="left:632.50px;top:514px;font-size:16.5px;line-height:18px;color:#33415c;letter-spacing:-0.547px;">Jacobs</span><span class="t" style="left:735.40px;top:514px;font-size:16.5px;line-height:18px;color:#33415c;letter-spacing:-0.180px;">32</span><span class="t" style="left:792.30px;top:514px;font-size:16.5px;line-height:18px;color:#33415c;letter-spacing:0.014px;">Front-End</span><span class="t" style="left:792.30px;top:537px;font-size:16.5px;line-height:18px;color:#33415c;letter-spacing:0.031px;">Developer</span><span class="t" style="left:893.50px;top:514px;font-size:16.5px;line-height:18px;color:#33415c;letter-spacing:-0.152px;">New York</span><span class="t" style="left:893.50px;top:537px;font-size:16.5px;line-height:18px;color:#33415c;letter-spacing:0.270px;">City</span><span class="t" style="left:995.60px;top:514px;font-size:16.5px;line-height:18px;color:#33415c;letter-spacing:0.115px;">Development</span><span class="t" style="left:539.50px;top:577px;font-size:16.5px;line-height:18px;color:#33415c;letter-spacing:-0.159px;">Jordan</span><span class="t" style="left:632.50px;top:577px;font-size:16.5px;line-height:18px;color:#33415c;letter-spacing:-0.199px;">Johnson</span><span class="t" style="left:735.40px;top:577px;font-size:16.5px;line-height:18px;color:#33415c;letter-spacing:-0.180px;">26</span><span class="t" style="left:792.30px;top:577px;font-size:16.5px;line-height:18px;color:#33415c;letter-spacing:0.014px;">Front-End</span><span class="t" style="left:792.30px;top:600px;font-size:16.5px;line-height:18px;color:#33415c;letter-spacing:0.031px;">Developer</span><span class="t" style="left:893.50px;top:577px;font-size:16.5px;line-height:18px;color:#33415c;letter-spacing:-0.152px;">New York</span><span class="t" style="left:893.50px;top:600px;font-size:16.5px;line-height:18px;color:#33415c;letter-spacing:0.270px;">City</span><span class="t" style="left:995.60px;top:577px;font-size:16.5px;line-height:18px;color:#33415c;letter-spacing:0.115px;">Development</span><div class="b" style="left:526px;top:629px;width:570px;height:25px;overflow:hidden;"><span class="t" style="left:13.50px;top:11px;font-size:16.5px;line-height:18px;color:#33415c;letter-spacing:0.065px;">Albert</span><span class="t" style="left:106.50px;top:11px;font-size:16.5px;line-height:18px;color:#33415c;letter-spacing:-0.199px;">Johason</span><span class="t" style="left:209.40px;top:11px;font-size:16.5px;line-height:18px;color:#33415c;letter-spacing:-0.180px;">35</span><span class="t" style="left:266.30px;top:11px;font-size:16.5px;line-height:18px;color:#33415c;letter-spacing:-1.215px;">Java</span><span class="t" style="left:367.50px;top:11px;font-size:16.5px;line-height:18px;color:#33415c;letter-spacing:-0.285px;">San Diego</span><span class="t" style="left:469.60px;top:11px;font-size:16.5px;line-height:18px;color:#33415c;letter-spacing:0.115px;">Development</span></div><div class="b" style="left:1096px;top:376px;width:48px;height:278px;background:#fff;"></div><span class="t" style="left:144.00px;top:679px;font-size:16px;line-height:17px;color:#1b5fcf;letter-spacing:0.085px;">Select macro</span><div class="b" style="left:1024px;top:669px;width:61px;height:36px;background:#0052cc;border-radius:3.5px;"></div><span class="t" style="left:1037.00px;top:680px;font-size:16px;line-height:17px;color:#fff;letter-spacing:-0.617px;-webkit-text-stroke:0.3px #fff;">Save</span><span class="t" style="left:1096.80px;top:680px;font-size:16px;line-height:17px;color:#1b5fcf;letter-spacing:-0.202px;">Cancel</span><svg class="b" style="left:268px;top:336px;" width="22" height="31" viewBox="0 0 22 31"><path d="M2 2 L2 26 L7.4 21.3 L11.3 29 L15.9 26.8 L12.4 20.3 L20 20.1z" fill="#fff" stroke="#000" stroke-width="1.2" stroke-linejoin="miter"/></svg><div class="b" style="left:1300px;top:0px;width:1px;height:796px;background:#8e24a6;"></div><div class="b" style="left:0px;top:795px;width:1301px;height:1px;background:#8e24a6;"></div></div></body></html>
